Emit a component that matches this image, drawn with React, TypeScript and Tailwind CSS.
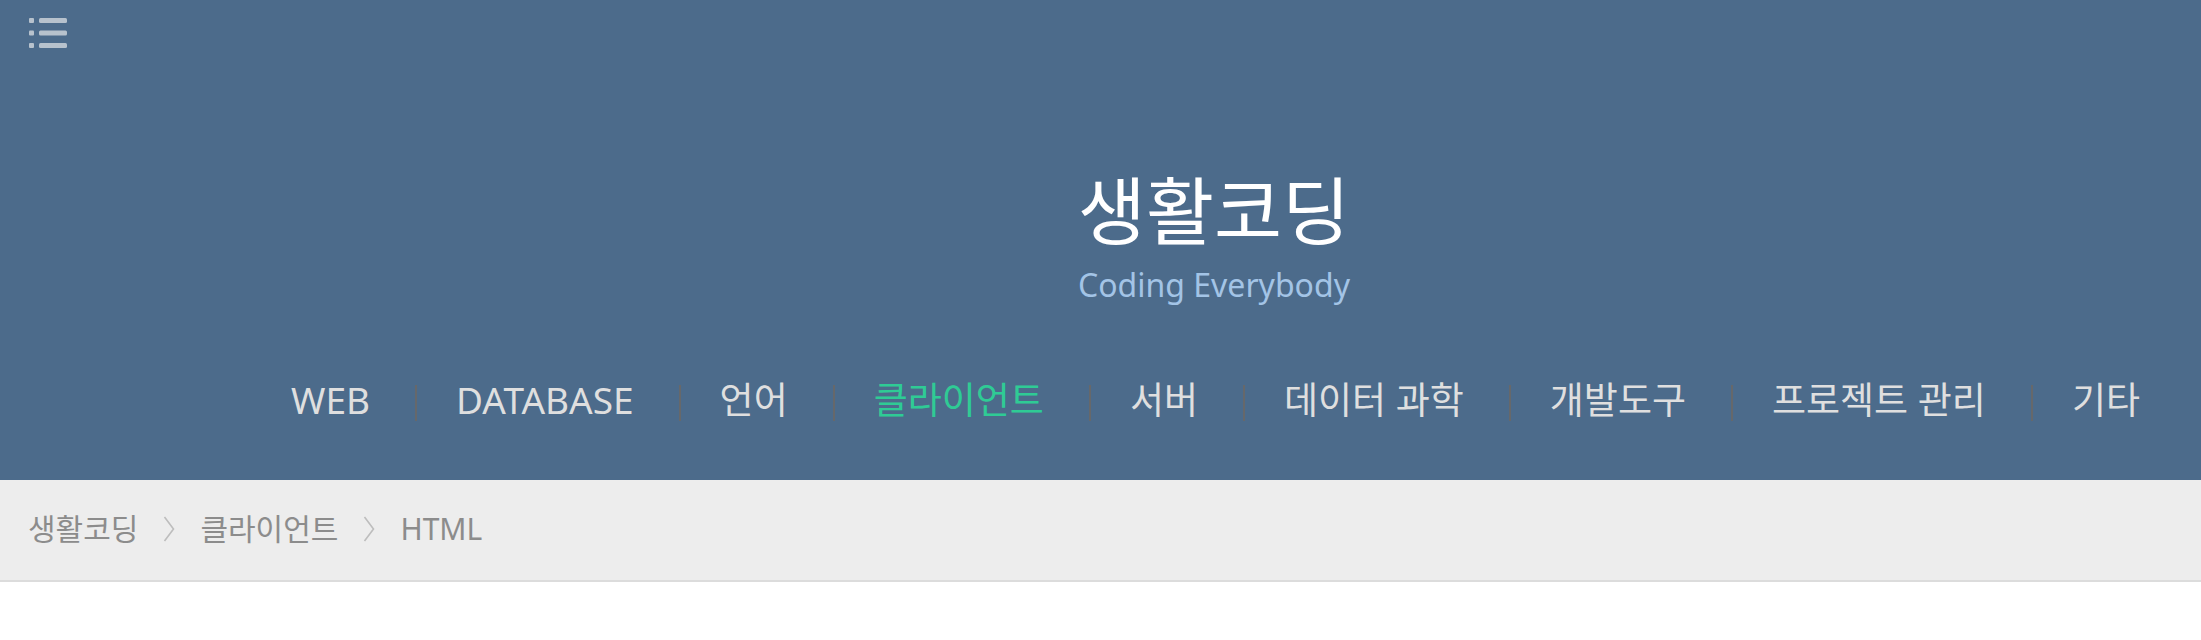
import React from 'react';

const navItems = [
  { label: 'WEB' },
  { label: 'DATABASE' },
  { label: '언어' },
  { label: '클라이언트', active: true },
  { label: '서버' },
  { label: '데이터 과학' },
  { label: '개발도구' },
  { label: '프로젝트 관리' },
  { label: '기타' },
];

const crumbs = ['생활코딩', '클라이언트', 'HTML'];

const font = { fontFamily: '"Noto Sans", "Noto Sans CJK KR", sans-serif' };

const MenuIcon = () => (
  <svg width="40" height="32" viewBox="0 0 40 32" fill="#b7c2cd">
    <rect x="1" y="0" width="5" height="5" rx="1" />
    <rect x="11" y="0" width="28" height="5" rx="1.5" />
    <rect x="1" y="12.5" width="5" height="5" rx="1" />
    <rect x="11" y="12.5" width="28" height="5" rx="1.5" />
    <rect x="1" y="25" width="5" height="5" rx="1" />
    <rect x="11" y="25" width="28" height="5" rx="1.5" />
  </svg>
);

const Chevron = () => (
  <svg width="12" height="26" viewBox="0 0 12 26" fill="none" className="mx-[25px] shrink-0">
    <polyline points="1.5,1 10.5,13 1.5,25" stroke="#bdbdbd" strokeWidth="1.6" />
  </svg>
);

export default function App() {
  return (
    <div className="min-h-[640px] bg-white" style={font}>
      {/* Header */}
      <header className="relative h-[480px] bg-[#4c6b8b] pl-[227px]">
        <button className="absolute left-[28px] top-[18px]">
          <MenuIcon />
        </button>

        <div className="flex flex-col items-center pt-[174px]">
          <h1 className="text-[74px] leading-none text-white font-normal">생활코딩</h1>
          <p className="mt-[21px] text-[32px] leading-none text-[#a3c4e6]">Coding Everybody</p>

          <nav className="mt-[81px] ml-[9px] flex items-start">
            {navItems.map((item, idx) => (
              <React.Fragment key={item.label}>
                {idx > 0 && <span className="mt-[3px] h-9 w-[2px] bg-[#66686b]" />}
                <a
                  href="#"
                  className={`pl-[39px] pr-[45px] text-[37px] leading-9 whitespace-nowrap ${
                    item.active ? 'text-[#2fcb95]' : 'text-[#dfdfdf]'
                  }`}
                >
                  {item.label}
                </a>
              </React.Fragment>
            ))}
          </nav>
        </div>
      </header>

      {/* Breadcrumb */}
      <div className="flex h-[102px] items-center border-b-2 border-[#dcdcdc] bg-[#ededed] px-[28px] pb-[2px]">
        {crumbs.map((c, idx) => (
          <React.Fragment key={c}>
            {idx > 0 && <Chevron />}
            <span className="text-[30px] leading-none text-[#8c8c8c]">{c}</span>
          </React.Fragment>
        ))}
      </div>
    </div>
  );
}
